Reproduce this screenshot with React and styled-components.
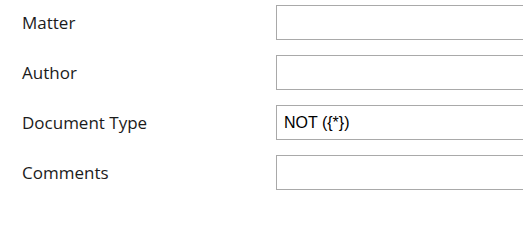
import React from "react";
import styled, { createGlobalStyle } from "styled-components";

const GlobalStyle = createGlobalStyle`
  body {
    margin: 0;
    background: #ffffff;
  }
`;

const Page = styled.div`
  width: 100%;
  overflow: hidden;
`;

const Form = styled.div`
  display: flex;
  flex-direction: column;
  gap: 15px;
  padding: 5px 0 0 22px;
  width: 560px;
`;

const Row = styled.div`
  display: grid;
  grid-template-columns: 254px 1fr;
  align-items: center;
  height: 35px;
`;

const Label = styled.label`
  font-family: "Open Sans", sans-serif;
  font-size: 17px;
  color: #1b1b1b;
`;

const Field = styled.input`
  box-sizing: border-box;
  height: 35px;
  width: 100%;
  border: 1px solid #a9a9a9;
  border-radius: 0;
  padding: 0 7px;
  font-family: "Liberation Sans", Arial, sans-serif;
  font-size: 16px;
  color: #000;
  background: #fff;
  outline: none;
`;

const fields = [
  { label: "Matter", value: "" },
  { label: "Author", value: "" },
  { label: "Document Type", value: "NOT ({*})" },
  { label: "Comments", value: "" },
];

export default function App() {
  return (
    <Page>
      <GlobalStyle />
      <Form>
        {fields.map((f) => (
          <Row key={f.label}>
            <Label>{f.label}</Label>
            <Field defaultValue={f.value} />
          </Row>
        ))}
      </Form>
    </Page>
  );
}
